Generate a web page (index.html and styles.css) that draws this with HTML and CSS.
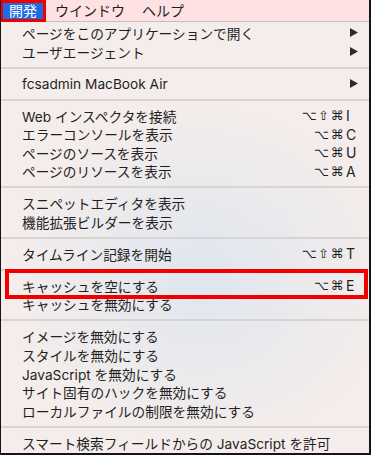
FILE: index.html
```html
<!DOCTYPE html>
<html lang="ja">
<head>
    <meta charset="UTF-8">
    <meta name="viewport" content="width=device-width, initial-scale=1.0">
    <title>開発メニュー</title>
    <link rel="stylesheet" href="styles.css">
</head>
<body>
    <div class="screen">
        <div class="menubar">
            <span class="bar-item active">開発</span>
            <span class="bar-item">ウインドウ</span>
            <span class="bar-item">ヘルプ</span>
        </div>

        <div class="menu">
            <div class="row"><span class="label">ページをこのアプリケーションで開く</span><span class="sc"><span class="mods"></span><span class="key"><svg class="arrow" width="8" height="9" viewBox="0 0 8 9"><polygon points="0,0 8,4.5 0,9" fill="#2b2b2b"/></svg></span></span></div>
            <div class="row"><span class="label">ユーザエージェント</span><span class="sc"><span class="mods"></span><span class="key"><svg class="arrow" width="8" height="9" viewBox="0 0 8 9"><polygon points="0,0 8,4.5 0,9" fill="#2b2b2b"/></svg></span></span></div>
            <div class="sep"></div>
            <div class="row"><span class="label">fcsadmin MacBook Air</span><span class="sc"><span class="mods"></span><span class="key"><svg class="arrow" width="8" height="9" viewBox="0 0 8 9"><polygon points="0,0 8,4.5 0,9" fill="#2b2b2b"/></svg></span></span></div>
            <div class="sep"></div>
            <div class="row"><span class="label">Web インスペクタを接続</span><span class="sc"><span class="mods">⌥⇧⌘</span><span class="key">I</span></span></div>
            <div class="row"><span class="label">エラーコンソールを表示</span><span class="sc"><span class="mods">⌥⌘</span><span class="key">C</span></span></div>
            <div class="row"><span class="label">ページのソースを表示</span><span class="sc"><span class="mods">⌥⌘</span><span class="key">U</span></span></div>
            <div class="row"><span class="label">ページのリソースを表示</span><span class="sc"><span class="mods">⌥⌘</span><span class="key">A</span></span></div>
            <div class="sep"></div>
            <div class="row"><span class="label">スニペットエディタを表示</span></div>
            <div class="row"><span class="label">機能拡張ビルダーを表示</span></div>
            <div class="sep"></div>
            <div class="row"><span class="label">タイムライン記録を開始</span><span class="sc"><span class="mods">⌥⇧⌘</span><span class="key">T</span></span></div>
            <div class="sep"></div>
            <div class="row marked"><span class="label">キャッシュを空にする</span><span class="sc"><span class="mods">⌥⌘</span><span class="key">E</span></span></div>
            <div class="row"><span class="label">キャッシュを無効にする</span></div>
            <div class="sep"></div>
            <div class="row"><span class="label">イメージを無効にする</span></div>
            <div class="row"><span class="label">スタイルを無効にする</span></div>
            <div class="row"><span class="label">JavaScript を無効にする</span></div>
            <div class="row"><span class="label">サイト固有のハックを無効にする</span></div>
            <div class="row"><span class="label">ローカルファイルの制限を無効にする</span></div>
            <div class="sep"></div>
            <div class="row"><span class="label">スマート検索フィールドからの JavaScript を許可</span></div>
        </div>
    </div>
</body>
</html>
```

FILE: styles.css
```css
body {
    margin: 0;
    font-family: Inter, "Noto Sans CJK JP", sans-serif;
    color: #1f1f1f;
}

.screen {
    box-sizing: border-box;
    width: 371px;
    height: 455px;
    overflow: hidden;
    border-left: 1px solid #151515;
    border-right: 2px solid #151515;
    border-bottom: 2px solid #151515;
    background:
        radial-gradient(ellipse 190px 170px at 200px 275px, #dfe6ef, rgba(223, 230, 239, 0)),
        #f4edeb;
}

/* top menu bar */
.menubar {
    display: flex;
    height: 21px;
    border-bottom: 1px solid #c6bebe;
    background: #fde1e3;
    font-size: 14px;
    line-height: 21px;
    margin-left: -1px;
}

.bar-item {
    padding: 0 8px;
}

.bar-item + .bar-item {
    margin-left: 1px;
}

.bar-item.active {
    position: relative;
    padding: 0 9px 0 9px;
    background: #1c6ce5;
    color: #fff;
}

.bar-item.active::after {
    content: "";
    position: absolute;
    top: 0;
    left: 0;
    right: 0;
    bottom: -1px;
    border: 3px solid #f20000;
}

/* dropdown */
.menu {
    padding-top: 1.7px;
    font-size: 13.7px;
}

.row {
    display: flex;
    align-items: center;
    height: 18.6px;
    padding: 0 9px 0 21px;
    white-space: nowrap;
}

.label {
    flex: 1;
}

.sc {
    display: flex;
    align-items: center;
}

.mods {
    font-family: "DejaVu Sans", sans-serif;
    font-size: 13px;
    letter-spacing: 1.5px;
    text-align: right;
}

.key {
    width: 14px;
    padding-left: 1px;
    font-size: 14px;
}

.arrow {
    display: block;
    margin-left: 4px;
}

.sep {
    height: 2px;
    margin: 5.7px 0;
    background: #d9d3d2;
}

/* red annotation frame */
.row.marked {
    position: relative;
}

.row.marked::after {
    content: "";
    position: absolute;
    top: -7.7px;
    bottom: -3.7px;
    left: 4px;
    right: 1px;
    border: 4px solid #f20000;
}
```
